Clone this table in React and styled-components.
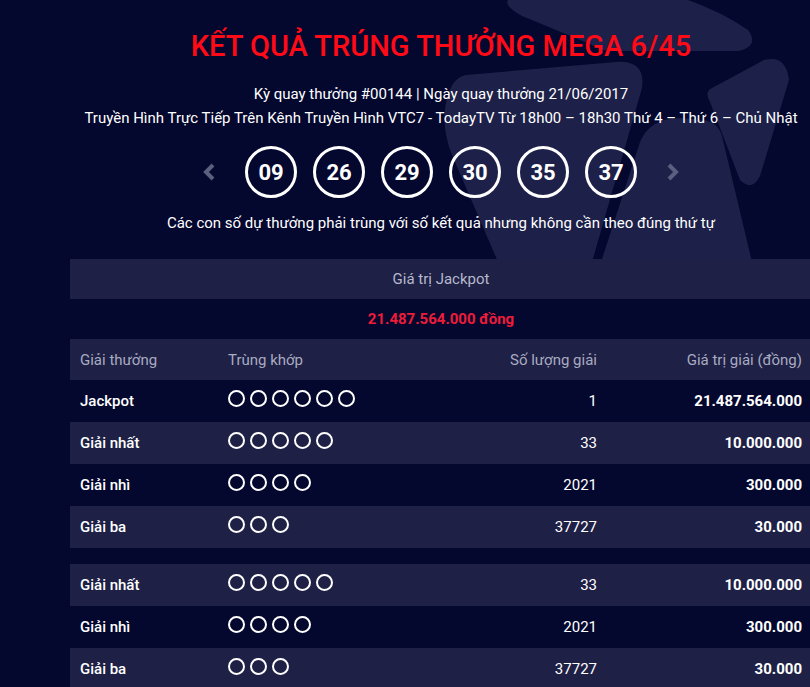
import styled, { createGlobalStyle } from "styled-components";

const GlobalStyle = createGlobalStyle`
    html, body {
        margin: 0;
        padding: 0;
        background: #04072e;
        overflow: hidden;
    }
    body {
        font-family: Roboto, "Noto Sans", "Liberation Sans", sans-serif;
        color: #ffffff;
    }
`

const numbers = ["09", "26", "29", "30", "35", "37"];

const prizes = [
    { name: "Jackpot", match: 6, count: "1", value: "21.487.564.000" },
    { name: "Giải nhất", match: 5, count: "33", value: "10.000.000" },
    { name: "Giải nhì", match: 4, count: "2021", value: "300.000" },
    { name: "Giải ba", match: 3, count: "37727", value: "30.000" },
];

const extra = prizes.slice(1);

function Chevron({ dir }) {
    const pts = dir === "left" ? "11,3 4,10 11,17" : "4,3 11,10 4,17";
    return (
        <svg width="15" height="20" viewBox="0 0 15 20">
            <polyline points={pts} fill="none" stroke="#5b6080" strokeWidth="4" strokeLinejoin="miter" />
        </svg>
    );
}

function Pinwheel() {
    return (
        <Decor width="810" height="260" viewBox="0 0 810 260">
            <g fill="#1d2048">
                <path d="M 508 0 L 688 0 Q 722 12 748 30 Q 760 46 738 51 L 612 51 Q 600 51 590 44 L 522 16 Q 504 6 508 0 Z" />
                <path d="M 712 88 L 764 60 Q 786 54 789 80 L 760 176 Q 752 192 740 180 L 710 102 Q 704 92 712 88 Z" />
                <path d="M 466 75 L 616 62 Q 646 60 642 88 L 592 262 L 498 262 L 452 155 Q 440 125 447 98 Q 452 78 466 75 Z" />
                <path d="M 601 262 L 640 142 Q 650 118 680 118 L 704 120 Q 718 122 722 136 L 752 262 Z" />
            </g>
        </Decor>
    );
}

function PrizeRow({ prize, light }) {
    return (
        <Row $light={light}>
            <Cell $medium>{prize.name}</Cell>
            <Cell>
                <Dots>{Array.from({ length: prize.match }).map((_, k) => <Dot key={k} />)}</Dots>
            </Cell>
            <Cell $right>{prize.count}</Cell>
            <Cell $right $bold>{prize.value}</Cell>
        </Row>
    );
}

export default function App() {
    return (
        <Page>
            <GlobalStyle />
            <Pinwheel />
            <Content>
                <Title>KẾT QUẢ TRÚNG THƯỞNG MEGA 6/45</Title>
                <Info>Kỳ quay thưởng #00144 | Ngày quay thưởng 21/06/2017</Info>
                <Info>Truyền Hình Trực Tiếp Trên Kênh Truyền Hình VTC7 - TodayTV Từ 18h00 – 18h30 Thứ 4 – Thứ 6 – Chủ Nhật</Info>
                <Balls>
                    <Arrow><Chevron dir="left" /></Arrow>
                    {numbers.map(n => <Ball key={n}>{n}</Ball>)}
                    <Arrow><Chevron dir="right" /></Arrow>
                </Balls>
                <Note>Các con số dự thưởng phải trùng với số kết quả nhưng không cần theo đúng thứ tự</Note>

                <Table>
                    <JackpotHead>Giá trị Jackpot</JackpotHead>
                    <JackpotValue>21.487.564.000 đồng</JackpotValue>
                    <Row $light $head>
                        <Cell>Giải thưởng</Cell>
                        <Cell>Trùng khớp</Cell>
                        <Cell $right>Số lượng giải</Cell>
                        <Cell $right>Giá trị giải (đồng)</Cell>
                    </Row>
                    {prizes.map((p, i) => <PrizeRow key={p.name} prize={p} light={i % 2 === 1} />)}
                    <Spacer />
                    {extra.map((p, i) => <PrizeRow key={"x" + p.name} prize={p} light={i % 2 === 0} />)}
                </Table>
            </Content>
        </Page>
    )
}

const Page = styled.div`
    position: relative;
    width: 810px;
    height: 687px;
    overflow: hidden;
    background: #04072e;
`

const Decor = styled.svg`
    position: absolute;
    left: 0;
    top: 0;
    z-index: 0;
`

const Content = styled.div`
    position: relative;
    z-index: 1;
    width: 742px;
    margin-left: 70px;
    display: flex;
    flex-direction: column;
    align-items: center;
`

const Title = styled.h1`
    margin: 29px 0 0;
    font-size: 29px;
    font-weight: 500;
    line-height: 34px;
    color: #ff0a16;
    white-space: nowrap;
`

const Info = styled.div`
    font-size: 15px;
    font-weight: 400;
    line-height: 24px;
    color: #ffffff;
    white-space: nowrap;
    &:first-of-type {
        margin-top: 19px;
    }
`

const Balls = styled.div`
    display: flex;
    align-items: center;
    gap: 16px;
    margin-top: 16px;
`

const Arrow = styled.div`
    width: 15px;
    height: 20px;
    display: flex;
    margin: 0 12px;
`

const Ball = styled.div`
    width: 46px;
    height: 46px;
    border: 3px solid #ffffff;
    border-radius: 50%;
    display: flex;
    align-items: center;
    justify-content: center;
    font-size: 22px;
    font-weight: 700;
    color: #ffffff;
`

const Note = styled.div`
    margin-top: 14px;
    font-size: 15px;
    font-weight: 400;
    line-height: 22px;
    white-space: nowrap;
`

const Table = styled.div`
    align-self: stretch;
    margin-top: 25px;
    display: flex;
    flex-direction: column;
`

const JackpotHead = styled.div`
    height: 40px;
    display: flex;
    align-items: center;
    justify-content: center;
    background: #1e2046;
    color: #b6b8cc;
    font-size: 15px;
    font-weight: 400;
`

const JackpotValue = styled.div`
    height: 40px;
    display: flex;
    align-items: center;
    justify-content: center;
    background: #04072e;
    color: #ee1c3a;
    font-size: 15px;
    font-weight: 700;
`

const Row = styled.div`
    display: grid;
    grid-template-columns: 148px 235px 154px 205px;
    align-items: center;
    height: ${p => (p.$head ? "41px" : "42px")};
    background: ${p => (p.$light ? "#1e2046" : "#04072e")};
    color: ${p => (p.$head ? "#a9abc0" : "#ffffff")};
    font-size: 15px;
    font-weight: 400;
`

const Cell = styled.div`
    padding: 0 10px;
    text-align: ${p => (p.$right ? "right" : "left")};
    font-weight: ${p => (p.$bold ? 700 : p.$medium ? 500 : "inherit")};
    white-space: nowrap;
`

const Dots = styled.div`
    display: flex;
    gap: 5px;
    margin-top: -6px;
`

const Dot = styled.span`
    box-sizing: border-box;
    width: 17px;
    height: 17px;
    border: 2.5px solid #ffffff;
    border-radius: 50%;
`

const Spacer = styled.div`
    height: 16px;
    background: #04072e;
`
